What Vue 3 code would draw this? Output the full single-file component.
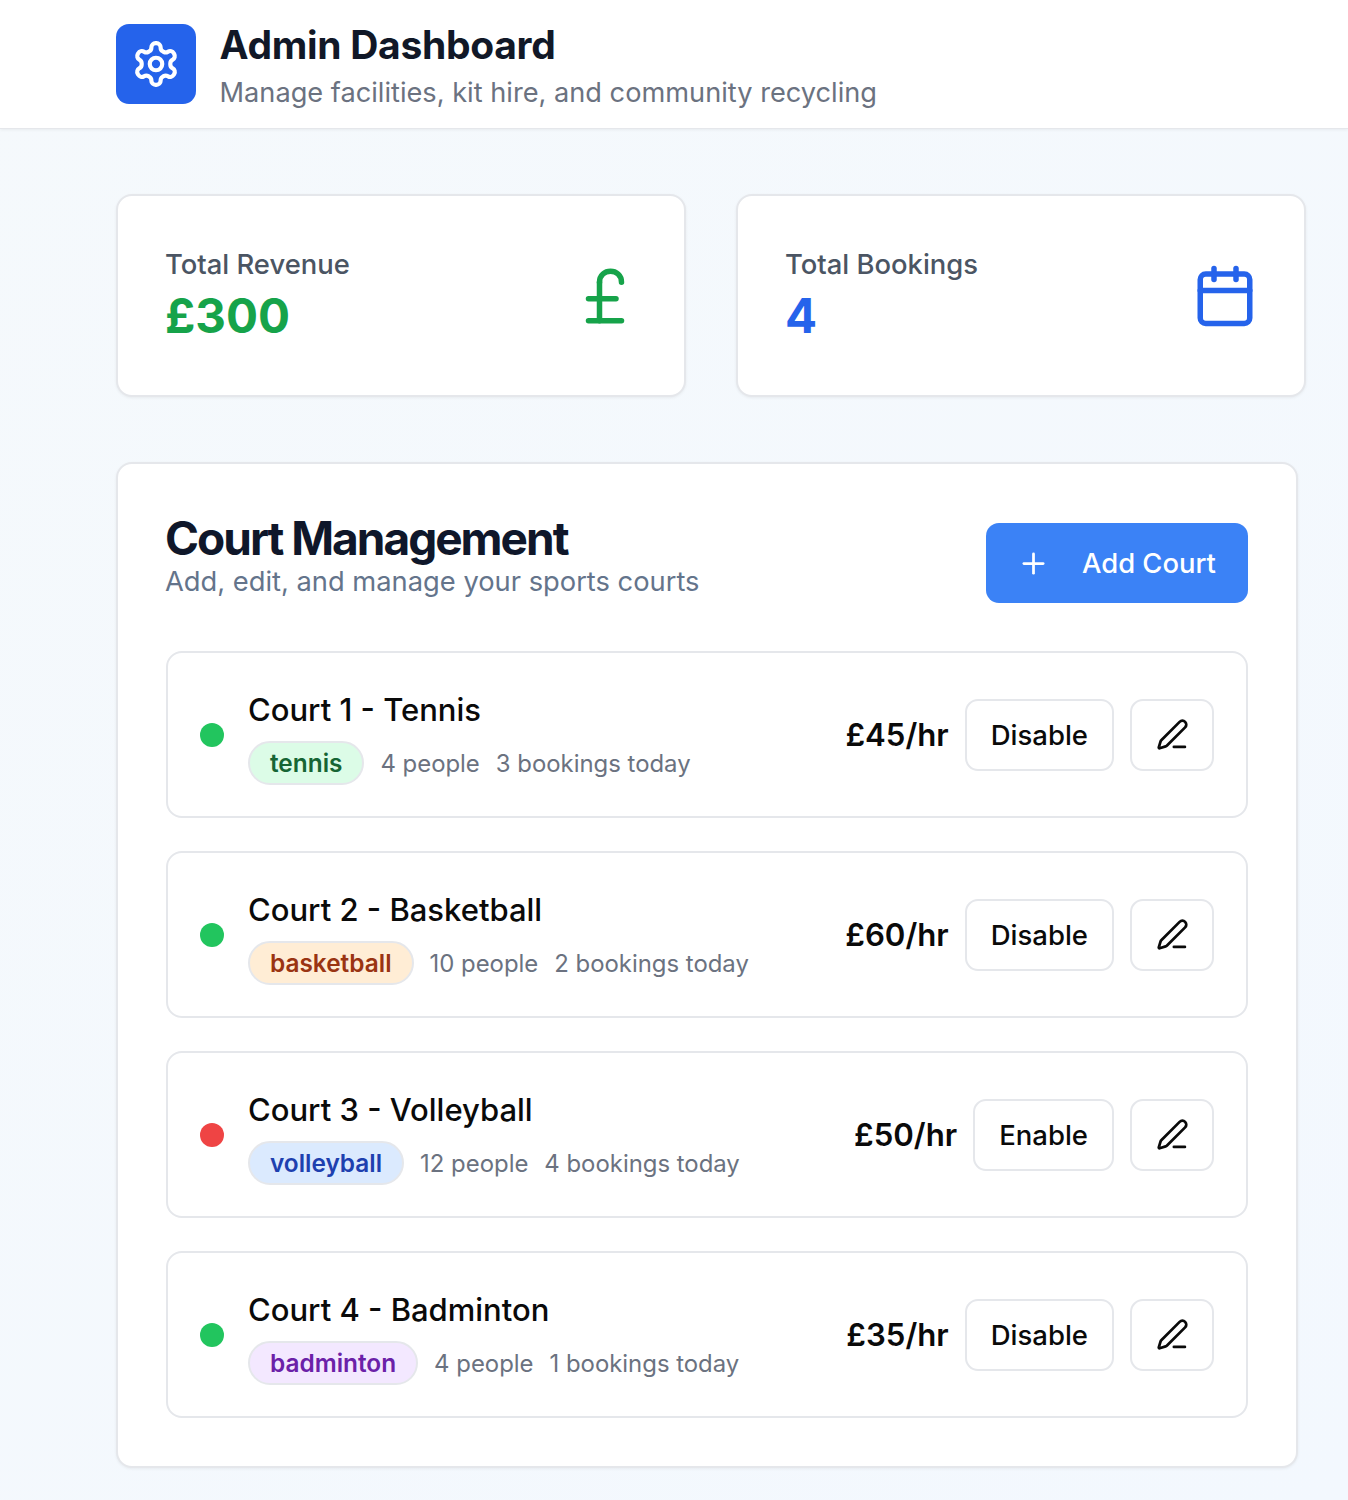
<template>
  <div class="page">
    <!-- header -->
    <header class="top">
      <div class="logo">
        <svg viewBox="0 0 24 24" width="50" height="50" class="ic">
          <path d="M12.22 2h-.44a2 2 0 0 0-2 2v.18a2 2 0 0 1-1 1.73l-.43.25a2 2 0 0 1-2 0l-.15-.08a2 2 0 0 0-2.73.73l-.22.38a2 2 0 0 0 .73 2.73l.15.1a2 2 0 0 1 1 1.72v.51a2 2 0 0 1-1 1.74l-.15.09a2 2 0 0 0-.73 2.73l.22.38a2 2 0 0 0 2.73.73l.15-.08a2 2 0 0 1 2 0l.43.25a2 2 0 0 1 1 1.73V20a2 2 0 0 0 2 2h.44a2 2 0 0 0 2-2v-.18a2 2 0 0 1 1-1.73l.43-.25a2 2 0 0 1 2 0l.15.08a2 2 0 0 0 2.73-.73l.22-.39a2 2 0 0 0-.73-2.73l-.15-.08a2 2 0 0 1-1-1.74v-.5a2 2 0 0 1 1-1.74l.15-.09a2 2 0 0 0 .73-2.73l-.22-.38a2 2 0 0 0-2.73-.73l-.15.08a2 2 0 0 1-2 0l-.43-.25a2 2 0 0 1-1-1.73V4a2 2 0 0 0-2-2z" />
          <circle cx="12" cy="12" r="3" />
        </svg>
      </div>
      <div class="top-text">
        <h1>Admin Dashboard</h1>
        <p class="top-sub">Manage facilities, kit hire, and community recycling</p>
      </div>
    </header>

    <main class="content">
      <!-- stats -->
      <section class="stats">
        <div class="stat">
          <div>
            <div class="stat-label">Total Revenue</div>
            <div class="stat-value green">£300</div>
          </div>
          <svg viewBox="0 0 24 24" width="66" height="66" class="ic green">
            <path d="M18 7c0-5.333-8-5.333-8 0" />
            <path d="M10 7v14" />
            <path d="M6 21h12" />
            <path d="M6 13h10" />
          </svg>
        </div>
        <div class="stat">
          <div>
            <div class="stat-label">Total Bookings</div>
            <div class="stat-value blue">4</div>
          </div>
          <svg viewBox="0 0 24 24" width="66" height="66" class="ic blue">
            <path d="M8 2v4" />
            <path d="M16 2v4" />
            <rect x="3" y="4" width="18" height="18" rx="2" />
            <path d="M3 10h18" />
          </svg>
        </div>
      </section>

      <!-- courts -->
      <section class="panel">
        <div class="panel-head">
          <div>
            <h2>Court Management</h2>
            <p class="panel-sub">Add, edit, and manage your sports courts</p>
          </div>
          <button class="add-btn">
            <svg viewBox="0 0 24 24" width="33" height="33" class="ic">
              <path d="M5 12h14" />
              <path d="M12 5v14" />
            </svg>
            Add Court
          </button>
        </div>

        <div class="courts">
          <div v-for="c in courts" :key="c.name" class="court">
            <span class="dot" :class="c.active ? 'on' : 'off'"></span>
            <div class="court-info">
              <div class="court-name">{{ c.name }}</div>
              <div class="court-meta">
                <span class="tag" :class="c.type">{{ c.type }}</span>
                <span>{{ c.people }} people</span>
                <span>{{ c.bookings }} bookings today</span>
              </div>
            </div>
            <div class="price">£{{ c.price }}/hr</div>
            <button class="btn">{{ c.active ? "Disable" : "Enable" }}</button>
            <button class="btn btn-icon">
              <svg viewBox="0 0 24 24" width="33" height="33" class="ic">
                <path d="M13 21h8" />
                <path d="M21.174 6.812a1 1 0 0 0-3.986-3.987L3.842 16.174a2 2 0 0 0-.5.83l-1.321 4.352a.5.5 0 0 0 .623.622l4.353-1.32a2 2 0 0 0 .83-.497z" />
              </svg>
            </button>
          </div>
        </div>
      </section>
    </main>
  </div>
</template>

<script setup>
const courts = [
  { name: "Court 1 - Tennis", type: "tennis", people: 4, bookings: 3, price: 45, active: true },
  { name: "Court 2 - Basketball", type: "basketball", people: 10, bookings: 2, price: 60, active: true },
  { name: "Court 3 - Volleyball", type: "volleyball", people: 12, bookings: 4, price: 50, active: false },
  { name: "Court 4 - Badminton", type: "badminton", people: 4, bookings: 1, price: 35, active: true },
];
</script>

<style>
html,
body {
  margin: 0;
}
</style>

<style scoped>
.page {
  height: 1500px;
  overflow: hidden;
  background: linear-gradient(135deg, #f5f9fc, #f3f8fe);
  font-family: Inter, "Liberation Sans", sans-serif;
  color: #111827;
}
.ic {
  fill: none;
  stroke: currentColor;
  stroke-width: 2;
  stroke-linecap: round;
  stroke-linejoin: round;
  flex-shrink: 0;
}
.green {
  color: #16a34a;
}
.blue {
  color: #2563eb;
}

/* header */
.top {
  display: flex;
  align-items: center;
  gap: 23.5px;
  height: 129px;
  padding-left: 116px;
  background: #fff;
  border-bottom: 1px solid #e5e7eb;
  box-shadow: 0 1px 3px rgba(0, 0, 0, 0.06);
  box-sizing: border-box;
}
.top-text {
  padding-top: 7px;
}
.logo {
  width: 80px;
  height: 80px;
  border-radius: 13px;
  background: #2563eb;
  color: #fff;
  display: flex;
  align-items: center;
  justify-content: center;
}
h1 {
  margin: 0;
  font-size: 39px;
  line-height: 44px;
  font-weight: 700;
  letter-spacing: -0.3px;
}
.top-sub {
  margin: 6px 0 0;
  font-size: 27.2px;
  line-height: 40px;
  color: #6b7280;
}

.content {
  padding: 65px 0 0 116px;
}

/* stats */
.stats {
  display: grid;
  grid-template-columns: 570px 570px;
  gap: 50px;
}
.stat {
  height: 203px;
  box-sizing: border-box;
  padding: 0 46px 0 47px;
  display: flex;
  align-items: center;
  justify-content: space-between;
  background: #fff;
  border: 2px solid #e5e7eb;
  border-radius: 16px;
  box-shadow: 0 1px 3px rgba(0, 0, 0, 0.06);
}
.stat-label {
  font-size: 27.4px;
  line-height: 38px;
  font-weight: 500;
  color: #4b5563;
}
.stat-value {
  margin-top: 2px;
  font-size: 47.5px;
  line-height: 62px;
  font-weight: 700;
}

/* panel */
.panel {
  width: 1182px;
  height: 1006px;
  box-sizing: border-box;
  margin-top: 65px;
  padding: 50px 48px 50px 47px;
  background: #fff;
  border: 2px solid #e5e7eb;
  border-radius: 16px;
  box-shadow: 0 1px 3px rgba(0, 0, 0, 0.06);
}
.panel-head {
  display: flex;
  align-items: flex-start;
  justify-content: space-between;
}
h2 {
  margin: 0 0 2px;
  font-size: 46px;
  line-height: 48px;
  font-weight: 700;
  letter-spacing: -2px;
  color: #0f172a;
}
.panel-sub {
  margin: 0;
  font-size: 27.3px;
  line-height: 36px;
  color: #64748b;
}
.add-btn {
  display: flex;
  align-items: center;
  gap: 32px;
  width: 262px;
  height: 80px;
  margin-top: 9px;
  padding: 0 0 0 31px;
  box-sizing: border-box;
  border: none;
  border-radius: 13px;
  background: #3b82f6;
  color: #fff;
  font: 500 27.4px Inter, sans-serif;
}

/* court rows */
.courts {
  margin: 48px 0 0 1px;
  display: flex;
  flex-direction: column;
  gap: 33px;
}
.court {
  display: flex;
  align-items: center;
  height: 167px;
  box-sizing: border-box;
  padding: 0 32px;
  border: 2px solid #e5e7eb;
  border-radius: 16px;
}
.dot {
  width: 24px;
  height: 24px;
  border-radius: 50%;
  margin-right: 24px;
}
.dot.on {
  background: #22c55e;
}
.dot.off {
  background: #ef4444;
}
.court-info {
  flex: 1;
  padding-top: 6px;
}
.court-name {
  font-size: 31px;
  line-height: 40px;
  font-weight: 500;
  color: #0a0a0a;
}
.court-meta {
  margin-top: 11px;
  display: flex;
  align-items: center;
  gap: 16px;
  font-size: 23.9px;
  color: #6b7280;
}
.tag {
  padding: 0 20px;
  height: 40px;
  font-size: 24.4px;
  line-height: 40px;
  border-radius: 22px;
  border: 2px solid #e5e7eb;
  font-weight: 600;
}
.tag.tennis {
  background: #dcfce7;
  color: #166534;
}
.tag.basketball {
  background: #ffedd5;
  color: #9a3412;
}
.tag.volleyball {
  background: #dbeafe;
  color: #1e40af;
}
.tag.badminton {
  background: #f3e8ff;
  color: #6b21a8;
}
.price {
  padding-top: 1px;
  font-size: 31.2px;
  font-weight: 600;
  margin-right: 16px;
  color: #0a0a0a;
}
.btn {
  height: 72px;
  padding: 0 24px;
  border: 2px solid #e5e7eb;
  border-radius: 13px;
  background: #fff;
  color: #0a0a0a;
  font: 500 27.5px Inter, sans-serif;
}
.btn-icon {
  width: 84px;
  margin-left: 16px;
  padding: 0;
  display: flex;
  align-items: center;
  justify-content: center;
}
</style>
